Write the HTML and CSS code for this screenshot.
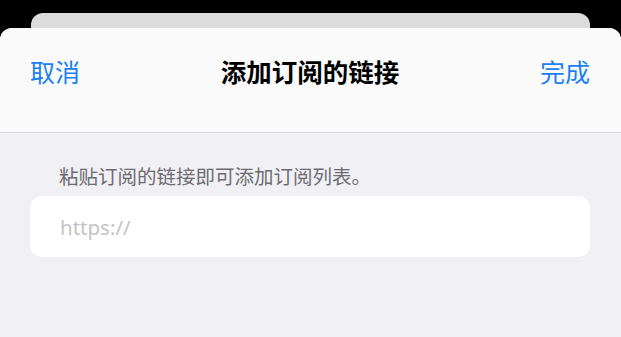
FILE: index.html
```html
<!DOCTYPE html>
<html lang="zh-CN">
<head>
<meta charset="utf-8">
<title>添加订阅的链接</title>
<link rel="stylesheet" href="styles.css">
</head>
<body>
<div class="screen">
  <div class="back-card"></div>
  <div class="sheet">
    <header class="nav">
      <span class="nav-btn">取消</span>
      <span class="nav-title">添加订阅的链接</span>
      <span class="nav-btn done">完成</span>
    </header>
    <main class="content">
      <p class="hint">粘贴订阅的链接即可添加订阅列表。</p>
      <div class="field"><span class="placeholder">https://</span></div>
    </main>
  </div>
</div>
</body>
</html>
```

FILE: styles.css
```css
html, body {
  margin: 0;
  padding: 0;
  background: #000;
  height: 100%;
  overflow: hidden;
}
.screen {
  display: flex;
  flex-direction: column;
  height: 100%;
  padding-top: 13px;
  box-sizing: border-box;
  font-family: "Noto Sans CJK SC", "Noto Sans", sans-serif;
}
.back-card {
  height: 15px;
  margin: 0 31px;
  background: #dcdcdc;
  border-radius: 12px 12px 0 0;
  flex: none;
}
.sheet {
  flex: 1;
  display: flex;
  flex-direction: column;
  background: #f0f0f5;
  border-radius: 12px 12px 0 0;
  overflow: hidden;
}
.nav {
  display: flex;
  justify-content: space-between;
  align-items: center;
  height: 105px;
  padding: 0 31px 0 30px;
  padding-bottom: 19px;
  box-sizing: border-box;
  background: #fafafa;
  border-bottom: 1px solid #d9d9dc;
  flex: none;
}
.nav-btn {
  font-size: 25px;
  line-height: 30px;
  color: #1a80f4;
}
.nav-title {
  font-size: 25.5px;
  line-height: 30px;
  font-weight: 600;
  color: #000;
}
.content {
  padding-top: 31px;
}
.hint {
  margin: 0 0 8px;
  padding-left: 59px;
  font-size: 19.5px;
  line-height: 24px;
  color: #6c6c70;
}
.field {
  margin: 0 31px 0 30px;
  height: 61px;
  background: #fff;
  border-radius: 12px;
  display: flex;
  align-items: center;
  padding-left: 30px;
}
.placeholder {
  font-family: "Noto Sans", sans-serif;
  font-size: 20.5px;
  color: #c4c4c7;
}
```
